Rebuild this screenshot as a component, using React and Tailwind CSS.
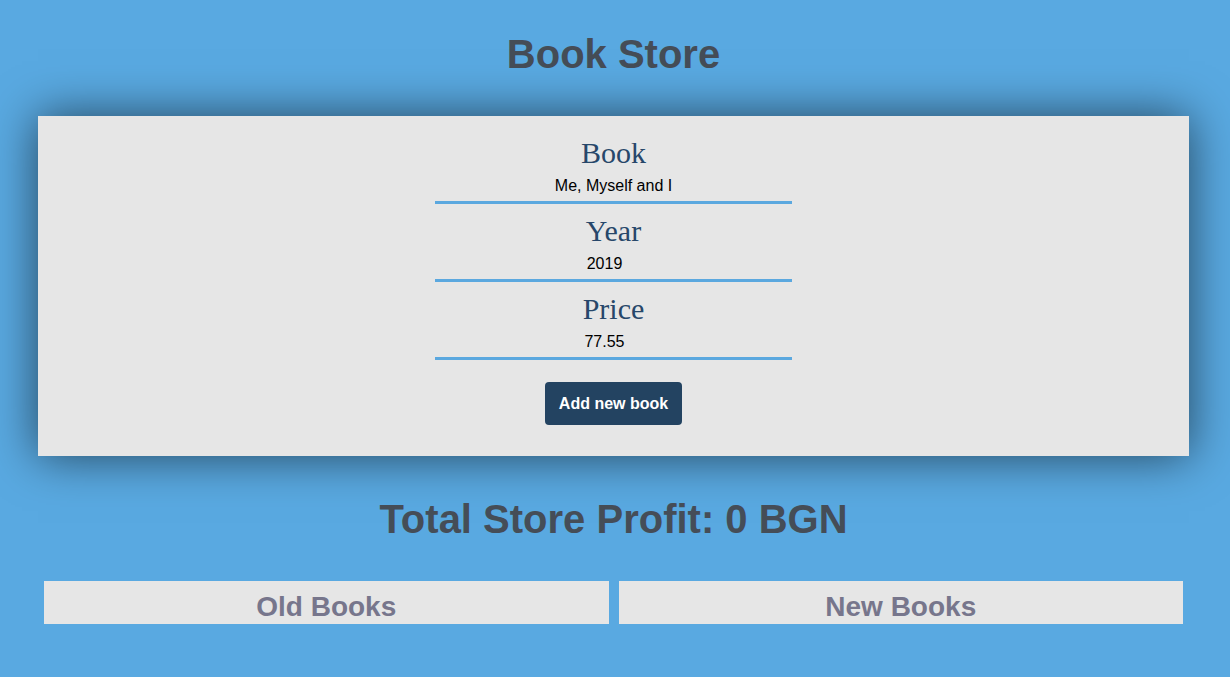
import React from "react";

function Field({ label, value, shift }) {
  return (
    <div className="flex flex-col items-center">
      <label
        className="block text-[30px] leading-[33px] text-[#27476a]"
        style={{ fontFamily: '"Liberation Serif", "Times New Roman", serif' }}
      >
        {label}
      </label>
      <input
        type="text"
        readOnly
        value={value}
        className={`block w-[357px] h-[35px] pt-[2px] bg-transparent border-0 border-b-[3px] border-[#5ba8df] text-center text-[16px] leading-[18px] text-black outline-none ${shift ? "pr-[18px]" : ""}`}
        style={{ fontFamily: '"Liberation Sans", Arial, sans-serif' }}
      />
    </div>
  );
}

export default function App() {
  return (
    <div
      className="min-h-[677px] w-full bg-[#59a9e1]"
      style={{ fontFamily: '"Liberation Sans", Arial, sans-serif' }}
    >
      <div className="w-[1227px] pt-[31px] pb-[54px] flex flex-col items-center">
        <h1 className="text-[40px] leading-[46px] font-bold text-[#454d57]">
          Book Store
        </h1>

        <form className="mt-[39px] w-[1151px] bg-[#e6e6e6] pt-[20px] pb-[31px] flex flex-col items-center shadow-[0_0_45px_rgba(0,0,0,0.6)]">
          <Field label="Book" value="Me, Myself and I" />
          <div className="mt-[10px]">
            <Field label="Year" value="2019" shift />
          </div>
          <div className="mt-[10px]">
            <Field label="Price" value="77.55" shift />
          </div>
          <button
            type="button"
            className="mt-[22px] h-[43px] w-[137px] rounded-[4px] bg-[#234361] text-white text-[16px] font-bold leading-[18px]"
          >
            Add new book
          </button>
        </form>

        <h1 className="mt-[40px] text-[40px] leading-[46px] font-bold text-[#454d57]">
          Total Store Profit: 0 BGN
        </h1>

        <div className="mt-[39px] w-[1139px] grid grid-cols-2 gap-[10px]">
          <div className="h-[43px] bg-[#e6e6e6] pt-[10px] text-center">
            <h2 className="text-[28px] leading-[32px] font-bold text-[#77768c]">
              Old Books
            </h2>
          </div>
          <div className="h-[43px] bg-[#e6e6e6] pt-[10px] text-center">
            <h2 className="text-[28px] leading-[32px] font-bold text-[#77768c]">
              New Books
            </h2>
          </div>
        </div>
      </div>
    </div>
  );
}
